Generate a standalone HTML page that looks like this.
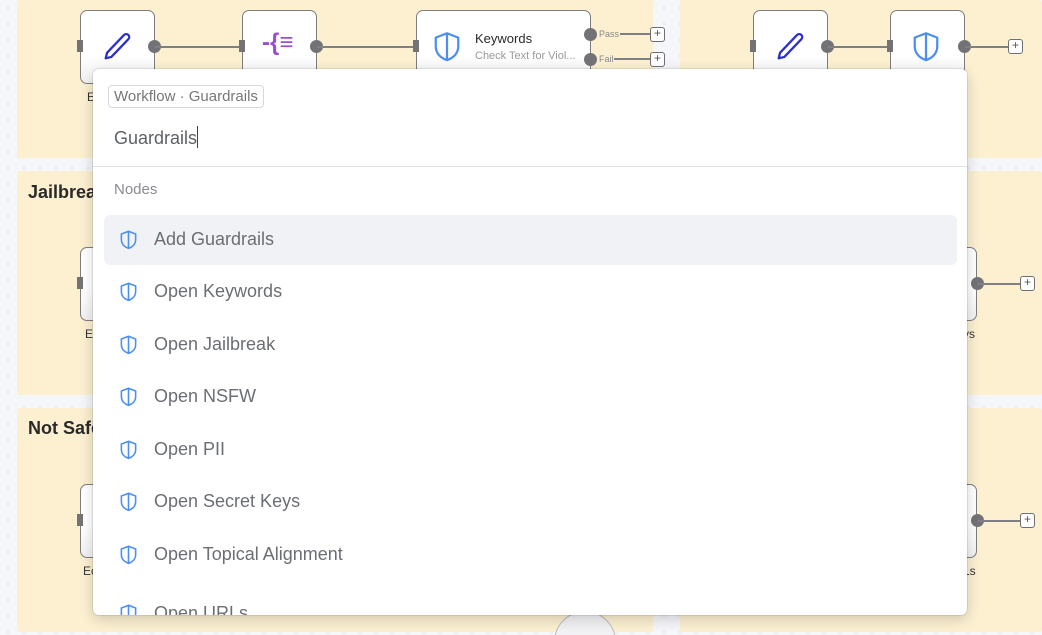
<!DOCTYPE html>
<html><head><meta charset="utf-8"><style>
*{box-sizing:border-box;margin:0;padding:0}
html{width:1042px;height:635px;overflow:hidden}
body{width:1042px;height:635px;overflow:hidden;position:relative;background:#f5f6f9;font-family:"Liberation Sans",sans-serif;
background-image:radial-gradient(#e2e4e9 1px,transparent 1.2px);background-size:16px 16px}
.a{position:absolute}
.panel{position:absolute;background:#fcf0d1;border-radius:2px}
.node{position:absolute;background:linear-gradient(#fff 60%,#f1f1f3);border:1.5px solid #7d7d80;border-radius:7px}
.h{position:absolute;background:#737377}
.dot{position:absolute;width:13px;height:13px;border-radius:50%;background:#737377}
.ln{position:absolute;height:2px;background:#808084}
.plus{position:absolute;width:15px;height:15px;border:1.5px solid #6f6f73;border-radius:3px;background:#fff;font-size:12px;line-height:11px;text-align:center;color:#555}
.ttl{position:absolute;font-weight:bold;font-size:18px;color:#2a2a2a}
.lbl{position:absolute;font-size:12px;color:#333}
.pal{position:absolute;left:93px;top:69px;width:874px;height:546px;background:#fff;border-radius:6px;box-shadow:0 4px 14px rgba(0,0,0,.18),0 0 0 1px rgba(0,0,0,.08);overflow:hidden}
.item{position:absolute;left:11px;width:853px;height:50px;border-radius:6px;font-size:18px;color:#6b6e74}
.item svg{position:absolute;left:15px;top:14px}
.item span{position:absolute;left:50px;top:14px}
</style></head><body>
<div class="panel" style="left:17px;top:0;width:636px;height:158px"></div>
<div class="panel" style="left:680px;top:0;width:362px;height:158px"></div>
<div class="panel" style="left:17px;top:171px;width:636px;height:224px"></div>
<div class="panel" style="left:680px;top:171px;width:362px;height:224px"></div>
<div class="panel" style="left:17px;top:408px;width:636px;height:224px"></div>
<div class="panel" style="left:680px;top:408px;width:362px;height:224px"></div>
<div class="ttl" style="left:28px;top:182px">Jailbreak</div>
<div class="ttl" style="left:28px;top:418px">Not Safe</div>

<div class="node" style="left:80px;top:10px;width:75px;height:74px"></div>
<svg class="a" style="left:100px;top:30px" width="34" height="34" viewBox="0 0 24 24"><path d="M17 3.5a2 2 0 0 1 3 3L8 19l-4 1 1-4z" fill="none" stroke="#2b2fcf" stroke-width="1.6" stroke-linejoin="round"/></svg>
<div class="h" style="left:77px;top:40px;width:6px;height:12px"></div>
<div class="dot" style="left:148px;top:40px"></div>
<div class="ln" style="left:155px;top:46px;width:85px"></div>
<div class="node" style="left:242px;top:10px;width:75px;height:74px"></div>
<div class="h" style="left:239px;top:40px;width:6px;height:12px"></div>
<div class="a" style="left:262px;top:29px;font-size:24px;color:#9b4fd0;font-weight:bold">-{≡</div>
<div class="dot" style="left:310px;top:40px"></div>
<div class="ln" style="left:317px;top:46px;width:97px"></div>
<div class="node" style="left:416px;top:10px;width:175px;height:74px"></div>
<div class="h" style="left:413px;top:40px;width:6px;height:12px"></div>
<svg class="a" style="left:432px;top:30px" width="30" height="34" viewBox="0 0 24 26"><path d="M12 2l9 3.5v7c0 6-4.5 9.5-9 11-4.5-1.5-9-5-9-11v-7z M12 2v21.5" fill="none" stroke="#4b8ff0" stroke-width="1.8" stroke-linejoin="round"/></svg>
<div class="a" style="left:475px;top:31px;font-size:13px;color:#2a2a2a">Keywords</div>
<div class="a" style="left:475px;top:50px;font-size:11px;color:#999">Check Text for Viol...</div>
<div class="dot" style="left:584px;top:28px"></div>
<div class="dot" style="left:584px;top:53px"></div>
<div class="a" style="left:599px;top:29px;font-size:9px;color:#888">Pass</div>
<div class="ln" style="left:620px;top:33px;width:30px;height:1.5px"></div>
<div class="a" style="left:599px;top:54px;font-size:9px;color:#888">Fail</div>
<div class="ln" style="left:614px;top:58px;width:36px;height:1.5px"></div>
<div class="plus" style="left:650px;top:27px">+</div>
<div class="plus" style="left:650px;top:52px">+</div>
<div class="lbl" style="left:87px;top:90px">E</div>

<div class="node" style="left:753px;top:10px;width:75px;height:74px"></div>
<div class="h" style="left:750px;top:40px;width:6px;height:12px"></div>
<svg class="a" style="left:773px;top:30px" width="34" height="34" viewBox="0 0 24 24"><path d="M17 3.5a2 2 0 0 1 3 3L8 19l-4 1 1-4z" fill="none" stroke="#2b2fcf" stroke-width="1.6" stroke-linejoin="round"/></svg>
<div class="dot" style="left:821px;top:40px"></div>
<div class="ln" style="left:828px;top:46px;width:60px"></div>
<div class="node" style="left:890px;top:10px;width:75px;height:74px"></div>
<div class="h" style="left:887px;top:40px;width:6px;height:12px"></div>
<svg class="a" style="left:911px;top:30px" width="30" height="34" viewBox="0 0 24 26"><path d="M12 2l9 3.5v7c0 6-4.5 9.5-9 11-4.5-1.5-9-5-9-11v-7z M12 2v21.5" fill="none" stroke="#4b8ff0" stroke-width="1.8" stroke-linejoin="round"/></svg>
<div class="dot" style="left:958px;top:40px"></div>
<div class="ln" style="left:965px;top:46px;width:44px"></div>
<div class="plus" style="left:1008px;top:39px">+</div>

<div class="node" style="left:80px;top:247px;width:75px;height:74px"></div>
<div class="h" style="left:77px;top:277px;width:6px;height:12px"></div>
<div class="lbl" style="left:85px;top:327px">E</div>
<div class="node" style="left:900px;top:247px;width:77px;height:74px"></div>
<div class="dot" style="left:971px;top:277px"></div>
<div class="ln" style="left:978px;top:283px;width:42px"></div>
<div class="plus" style="left:1020px;top:276px">+</div>
<div class="lbl" style="left:963px;top:327px">ys</div>
<div class="node" style="left:80px;top:484px;width:75px;height:74px"></div>
<div class="h" style="left:77px;top:514px;width:6px;height:12px"></div>
<div class="lbl" style="left:83px;top:564px">Ec</div>
<div class="node" style="left:900px;top:484px;width:77px;height:74px"></div>
<div class="dot" style="left:971px;top:514px"></div>
<div class="ln" style="left:978px;top:520px;width:42px"></div>
<div class="plus" style="left:1020px;top:513px">+</div>
<div class="lbl" style="left:963px;top:564px">Ls</div>
<div class="a" style="left:554px;top:611px;width:62px;height:24px;overflow:hidden"><div style="width:62px;height:62px;border-radius:50%;background:#f2f2f4;border:1.5px solid #b9b9bd"></div></div>

<div class="pal">
 <div class="a" style="left:15px;top:16px;border:1px solid #d8d8dc;border-radius:4px;padding:2px 5px;font-size:15px;color:#777">Workflow · Guardrails</div>
 <div class="a" style="left:21px;top:57px;font-size:18px;color:#5e6167">Guardrails<span style="display:inline-block;width:1px;height:22px;background:#444;vertical-align:-4px"></span></div>
 <div class="a" style="left:0;top:97px;width:100%;height:1px;background:#e1e2e5"></div>
 <div class="a" style="left:21px;top:112px;font-size:15px;color:#8a8c91">Nodes</div>
 <div class="item" style="top:146px;background:#f1f2f6"><svg width="19" height="22" viewBox="0 0 24 26"><path d="M12 2l9 3.5v7c0 6-4.5 9.5-9 11-4.5-1.5-9-5-9-11v-7z M12 2v21.5" fill="none" stroke="#4b8ff0" stroke-width="2"/></svg><span>Add Guardrails</span></div>
 <div class="item" style="top:198px"><svg width="19" height="22" viewBox="0 0 24 26"><path d="M12 2l9 3.5v7c0 6-4.5 9.5-9 11-4.5-1.5-9-5-9-11v-7z M12 2v21.5" fill="none" stroke="#4b8ff0" stroke-width="2"/></svg><span>Open Keywords</span></div>
 <div class="item" style="top:251px"><svg width="19" height="22" viewBox="0 0 24 26"><path d="M12 2l9 3.5v7c0 6-4.5 9.5-9 11-4.5-1.5-9-5-9-11v-7z M12 2v21.5" fill="none" stroke="#4b8ff0" stroke-width="2"/></svg><span>Open Jailbreak</span></div>
 <div class="item" style="top:303px"><svg width="19" height="22" viewBox="0 0 24 26"><path d="M12 2l9 3.5v7c0 6-4.5 9.5-9 11-4.5-1.5-9-5-9-11v-7z M12 2v21.5" fill="none" stroke="#4b8ff0" stroke-width="2"/></svg><span>Open NSFW</span></div>
 <div class="item" style="top:356px"><svg width="19" height="22" viewBox="0 0 24 26"><path d="M12 2l9 3.5v7c0 6-4.5 9.5-9 11-4.5-1.5-9-5-9-11v-7z M12 2v21.5" fill="none" stroke="#4b8ff0" stroke-width="2"/></svg><span>Open PII</span></div>
 <div class="item" style="top:408px"><svg width="19" height="22" viewBox="0 0 24 26"><path d="M12 2l9 3.5v7c0 6-4.5 9.5-9 11-4.5-1.5-9-5-9-11v-7z M12 2v21.5" fill="none" stroke="#4b8ff0" stroke-width="2"/></svg><span>Open Secret Keys</span></div>
 <div class="item" style="top:461px"><svg width="19" height="22" viewBox="0 0 24 26"><path d="M12 2l9 3.5v7c0 6-4.5 9.5-9 11-4.5-1.5-9-5-9-11v-7z M12 2v21.5" fill="none" stroke="#4b8ff0" stroke-width="2"/></svg><span>Open Topical Alignment</span></div>
 <div class="item" style="top:520px"><svg width="19" height="22" viewBox="0 0 24 26"><path d="M12 2l9 3.5v7c0 6-4.5 9.5-9 11-4.5-1.5-9-5-9-11v-7z M12 2v21.5" fill="none" stroke="#4b8ff0" stroke-width="2"/></svg><span>Open URLs</span></div>
</div>
</body></html>
